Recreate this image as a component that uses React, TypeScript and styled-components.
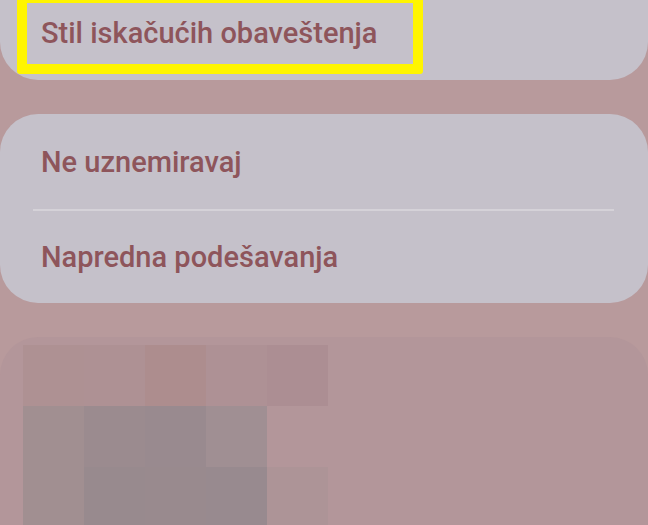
import styled, { createGlobalStyle } from 'styled-components'

const GlobalStyle = createGlobalStyle`
  html, body {
    margin: 0;
    padding: 0;
    background: #b89a9c;
    overflow: hidden;
  }
  body {
    width: 648px;
    height: 525px;
    font-family: Roboto, "Noto Sans", "Liberation Sans", sans-serif;
  }
`

const Page = styled.div`
  display: flex;
  flex-direction: column;
  gap: 34px;
  width: 648px;
  height: 525px;
  overflow: hidden;
`

const Card = styled.div<{ $clipTop?: boolean }>`
  position: relative;
  background: #c5c1ca;
  border-radius: 38px;
  display: flex;
  flex-direction: column;
  ${({ $clipTop }) => $clipTop && `
    margin-top: -55px;
    padding-top: 40px;
  `}
`

const Row = styled.div<{ $h?: number }>`
  position: relative;
  height: ${({ $h }) => $h ?? 95}px;
  display: flex;
  align-items: center;
  padding: 0 41px;
  font-size: 29px;
  font-weight: 500;
  color: #8e555b;
`

const Divider = styled.div`
  height: 2px;
  margin: 0 34px 0 33px;
  background: #d5d2d8;
`

const Highlight = styled.div`
  position: absolute;
  left: 17px;
  top: 8px;
  width: 386px;
  height: 61px;
  border: 10px solid #fff500;
  border-radius: 3px;
  pointer-events: none;
`

const MediaCard = styled.div`
  background: #b3969a;
  border-radius: 38px 38px 0 0;
  padding: 8px 23px 0;
  flex: 1;
`

const Mosaic = styled.div`
  display: grid;
  grid-template-columns: repeat(5, 61px);
  grid-auto-rows: 61px;
`

const Tile = styled.div<{ $bg: string }>`
  background: ${({ $bg }) => $bg};
`

const tiles = [
  '#ae9193', '#ae9194', '#ad8d8e', '#ae9195', '#ac8e93',
  '#a18f91', '#9b8b8f', '#998a8f', '#a08f93', 'transparent',
  '#a18f91', '#988a8e', '#998a8e', '#988a8f', '#ad9497',
]

export default function App() {
  return (
    <>
      <GlobalStyle />
      <Page>
        <Card $clipTop>
          <Row>
            Stil iskačućih obaveštenja
            <Highlight />
          </Row>
        </Card>
        <Card>
          <Row $h={95}>Ne uznemiravaj</Row>
          <Divider />
          <Row $h={92}>Napredna podešavanja</Row>
        </Card>
        <MediaCard>
          <Mosaic>
            {tiles.map((c, i) => (
              <Tile key={i} $bg={c} />
            ))}
          </Mosaic>
        </MediaCard>
      </Page>
    </>
  )
}
